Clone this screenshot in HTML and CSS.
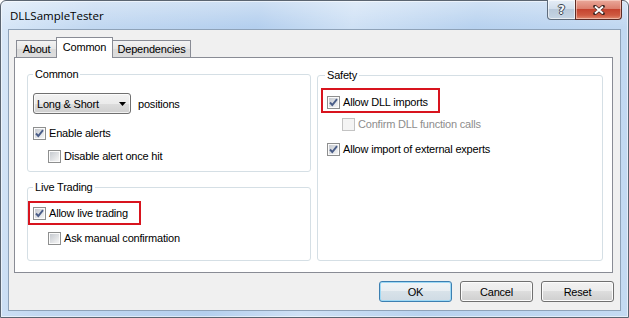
FILE: index.html
```html
<!DOCTYPE html>
<html lang="en">
<head>
    <meta charset="UTF-8">
    <title>DLLSampleTester</title>
    <link rel="stylesheet" href="styles.css">
</head>
<body>
    <div class="window">
        <div class="titlebar">
            <span class="title">DLLSampleTester</span>
            <div class="caption">
                <span class="cap cap-help">?</span>
                <span class="cap cap-close">
                    <svg width="12" height="10" viewBox="0 0 12 10">
                        <path d="M2 1.5 L10 8.5 M10 1.5 L2 8.5" stroke="#3b2420" stroke-width="3.6" stroke-linecap="round"/>
                        <path d="M2 1.5 L10 8.5 M10 1.5 L2 8.5" stroke="#fff" stroke-width="2"/>
                    </svg>
                </span>
            </div>
        </div>

        <div class="client">
            <div class="tabs">
                <span class="tab tab-about">About</span>
                <span class="tab tab-common active">Common</span>
                <span class="tab tab-deps">Dependencies</span>
            </div>

            <div class="panel">
                <div class="col">
                    <fieldset class="group group-common">
                        <legend>Common</legend>
                        <div class="combo-row">
                            <span class="combo">Long &amp; Short
                                <svg class="combo-arrow" width="7" height="4" viewBox="0 0 7 4"><path d="M0 0H7L3.5 4Z"/></svg>
                            </span>
                            <span>positions</span>
                        </div>
                        <label class="check-row gap-13">
                            <span class="box checked"><svg width="11" height="11" viewBox="0 0 11 11"><path d="M2 5.5 L4.3 8 L9 2.2" fill="none" stroke="#4a5d88" stroke-width="1.9"/></svg></span>
                            Enable alerts
                        </label>
                        <label class="check-row indent gap-10">
                            <span class="box"></span>
                            Disable alert once hit
                        </label>
                    </fieldset>

                    <fieldset class="group group-live">
                        <legend>Live Trading</legend>
                        <label class="check-row marked marked-live">
                            <span class="box checked"><svg width="11" height="11" viewBox="0 0 11 11"><path d="M2 5.5 L4.3 8 L9 2.2" fill="none" stroke="#4a5d88" stroke-width="1.9"/></svg></span>
                            Allow live trading
                        </label>
                        <label class="check-row indent gap-12">
                            <span class="box"></span>
                            Ask manual confirmation
                        </label>
                    </fieldset>
                </div>

                <fieldset class="group group-safety">
                    <legend>Safety</legend>
                    <label class="check-row marked marked-dll">
                        <span class="box checked"><svg width="11" height="11" viewBox="0 0 11 11"><path d="M2 5.5 L4.3 8 L9 2.2" fill="none" stroke="#4a5d88" stroke-width="1.9"/></svg></span>
                        Allow DLL imports
                    </label>
                    <label class="check-row indent gap-9 disabled">
                        <span class="box"></span>
                        Confirm DLL function calls
                    </label>
                    <label class="check-row gap-12">
                        <span class="box checked"><svg width="11" height="11" viewBox="0 0 11 11"><path d="M2 5.5 L4.3 8 L9 2.2" fill="none" stroke="#4a5d88" stroke-width="1.9"/></svg></span>
                        Allow import of external experts
                    </label>
                </fieldset>
            </div>

            <div class="buttons">
                <span class="btn btn-default">OK</span>
                <span class="btn">Cancel</span>
                <span class="btn">Reset</span>
            </div>
        </div>
    </div>
</body>
</html>
```

FILE: styles.css
```css
* {
    margin: 0;
    padding: 0;
    box-sizing: border-box;
}

body {
    width: 629px;
    height: 318px;
    overflow: hidden;
    font-family: "Liberation Sans", Arial, sans-serif;
    font-size: 11px;
    letter-spacing: -0.2px;
    color: #000;
    background: #fff;
}

/* Aero window frame */
.window {
    width: 629px;
    height: 318px;
    display: flex;
    flex-direction: column;
    padding: 0 7px 6px 7px;
    border: 1px solid #5b6571;
    border-radius: 6px 6px 0 0;
    background:
        linear-gradient(180deg, rgba(255, 255, 255, 0.35), rgba(255, 255, 255, 0) 26px),
        linear-gradient(100deg, #d9e8f8 0%, #c2d8f1 14%, #b4cfee 38%, #cfe1f5 52%, #b8d2ef 70%, #c4daf2 100%);
    box-shadow: inset 0 0 0 1px rgba(255, 255, 255, 0.55);
}

.titlebar {
    height: 28px;
    display: flex;
    align-items: flex-start;
    padding-left: 2px;
}

.title {
    font-family: "Open Sans", "Noto Sans", sans-serif;
    font-size: 11.5px;
    letter-spacing: 0;
    line-height: 29px;
    color: #000;
}

.caption {
    display: flex;
    margin-left: auto;
    margin-top: -1px;
    margin-right: -1px;
}

.cap {
    height: 20px;
    display: flex;
    align-items: center;
    justify-content: center;
    border: 1px solid #5e6c7c;
    border-top: none;
}

.cap-help {
    width: 29px;
    border-radius: 0 0 0 4px;
    background: linear-gradient(#e6eef7, #d3dfec 45%, #b9c9da 50%, #c6d5e4 100%);
    box-shadow: inset 0 0 0 1px rgba(255, 255, 255, 0.6);
    font-family: "DejaVu Sans", sans-serif;
    font-weight: bold;
    font-size: 12px;
    color: #f4f6f8;
    text-shadow: 1px 0 0 #3a4652, -1px 0 0 #3a4652, 0 1px 0 #3a4652, 0 -1px 0 #3a4652;
}

.cap-close {
    width: 47px;
    margin-left: -1px;
    border-color: #5d2c25;
    border-radius: 0 0 4px 0;
    background: linear-gradient(#eaa99b, #dc806e 45%, #c5442f 50%, #cf5a41 80%, #e28b70 100%);
    box-shadow: inset 0 0 0 1px rgba(255, 230, 220, 0.5);
}

/* Dialog client area */
.client {
    flex: 1;
    display: flex;
    flex-direction: column;
    padding: 7px 7px 0 5px;
    border: 1px solid #8ea2b8;
    background: #f0f0f0;
}

.tabs {
    display: flex;
    align-items: flex-end;
    height: 20px;
    padding-left: 2px;
}

.tab {
    height: 17px;
    line-height: 16px;
    text-align: center;
    border: 1px solid #898c95;
    border-bottom: none;
    background: linear-gradient(#f3f3f3, #e6e6e6 50%, #dadada 51%, #dedede);
}

.tab-about { width: 41px; }
.tab-common { width: 57px; margin: 0 -1px; }
.tab-deps { width: 79px; }

.tab.active {
    position: relative;
    z-index: 1;
    height: 21px;
    line-height: 18px;
    margin-bottom: -1px;
    background: #fff;
}

.panel {
    height: 216px;
    display: grid;
    grid-template-columns: 284px 286px;
    column-gap: 6px;
    align-items: start;
    padding: 10px 9px 0 12px;
    border: 1px solid #898c95;
    background: #fff;
}

.col {
    display: flex;
    flex-direction: column;
    gap: 9px;
}

/* Group boxes */
.group {
    min-width: 0;
    border: 1px solid #d5dfe5;
    border-radius: 3px;
}

.group legend {
    padding: 0 2px;
    line-height: 13px;
}

.group-common { height: 104px; padding: 12px 5px 0 5px; }
.group-live { height: 80px; padding: 13px 5px 0 5px; }
.group-safety { height: 192px; margin-top: 1px; padding: 14px 9px 0 9px; }
.group-safety legend { margin-left: -2px; }

.combo-row {
    display: flex;
    align-items: center;
    gap: 7px;
    height: 21px;
}

.combo {
    width: 98px;
    height: 21px;
    display: flex;
    align-items: center;
    padding: 0 4px 0 3px;
    border: 1px solid #707070;
    border-radius: 3px;
    background: linear-gradient(#f2f2f2, #ebebeb 50%, #dddddd 50%, #cfcfcf);
    box-shadow: inset 0 0 0 1px rgba(255, 255, 255, 0.7);
}

.combo-arrow {
    margin-left: auto;
}

/* Checkboxes */
.check-row {
    display: flex;
    align-items: center;
    gap: 3px;
    width: fit-content;
    height: 13px;
    line-height: 13px;
}

.check-row.indent { margin-left: 15px; }
.gap-9 { margin-top: 9px; }
.gap-10 { margin-top: 10px; }
.gap-12 { margin-top: 12px; }
.gap-13 { margin-top: 13px; }

.box {
    flex: none;
    width: 13px;
    height: 13px;
    padding: 1px;
    border: 1px solid #8e8f8f;
    background: linear-gradient(135deg, #c6cad0, #f5f5f5) content-box, #fbfbfb;
}

.box svg {
    display: block;
    margin: -1px;
}

.check-row.disabled { color: #8d8d8d; }

.check-row.disabled .box {
    border-color: #c3c3c3;
    background: #f4f4f4;
}

/* Red highlight frames */
.marked {
    position: relative;
}

.marked::after {
    content: '';
    position: absolute;
    border: 2px solid #d8141e;
}

.marked-live::after { top: -6px; bottom: -5px; left: -5px; right: -13px; }
.marked-dll::after { top: -8px; bottom: -4px; left: -6px; right: -12px; }

/* Bottom buttons */
.buttons {
    display: flex;
    justify-content: flex-end;
    gap: 8px;
    margin-top: 8px;
    margin-right: -1px;
}

.btn {
    width: 73px;
    height: 21px;
    display: flex;
    align-items: center;
    justify-content: center;
    border: 1px solid #707070;
    border-radius: 3px;
    background: linear-gradient(#f2f2f2, #ebebeb 50%, #dddddd 50%, #cfcfcf);
    box-shadow: inset 0 0 0 1px #fcfcfc;
}

.btn-default {
    border-color: #3c7fb1;
    background: linear-gradient(#f0f4f7, #e8eef2 50%, #d8e2e9 50%, #cfdbe4);
    box-shadow: inset 0 0 0 1px #9ed9f5;
}
```
